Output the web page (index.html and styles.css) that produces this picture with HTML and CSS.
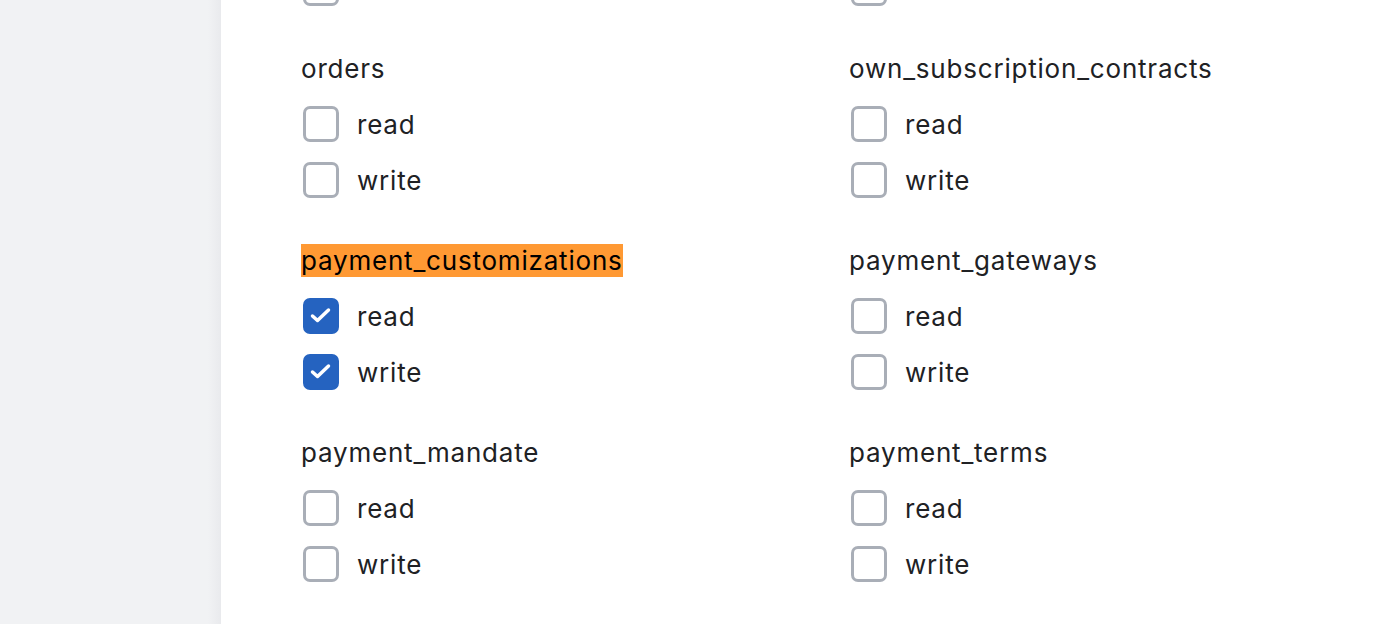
FILE: index.html
```html
<!DOCTYPE html>
<html>
<head>
<meta charset="utf-8">
<link rel="stylesheet" href="styles.css">
</head>
<body>
<div class="layout">
  <aside class="sidebar"></aside>
  <main class="panel">
    <div class="grid">
      <section class="group">
        <div class="title">&nbsp;</div>
        <label class="opt"><span class="box"></span><span>read</span></label>
        <label class="opt"><span class="box"></span><span>write</span></label>
      </section>
      <section class="group">
        <div class="title">&nbsp;</div>
        <label class="opt"><span class="box"></span><span>read</span></label>
        <label class="opt"><span class="box"></span><span>write</span></label>
      </section>

      <section class="group">
        <div class="title">orders</div>
        <label class="opt"><span class="box"></span><span>read</span></label>
        <label class="opt"><span class="box"></span><span>write</span></label>
      </section>
      <section class="group">
        <div class="title">own_subscription_contracts</div>
        <label class="opt"><span class="box"></span><span>read</span></label>
        <label class="opt"><span class="box"></span><span>write</span></label>
      </section>

      <section class="group">
        <div class="title"><mark class="hl">payment_customizations</mark></div>
        <label class="opt"><span class="box checked"><svg viewBox="0 0 36 36" width="36" height="36"><path d="M9.5 18 L14.5 22.5 L25.5 12" fill="none" stroke="#fff" stroke-width="3.5" stroke-linecap="round" stroke-linejoin="round"/></svg></span><span>read</span></label>
        <label class="opt"><span class="box checked"><svg viewBox="0 0 36 36" width="36" height="36"><path d="M9.5 18 L14.5 22.5 L25.5 12" fill="none" stroke="#fff" stroke-width="3.5" stroke-linecap="round" stroke-linejoin="round"/></svg></span><span>write</span></label>
      </section>
      <section class="group">
        <div class="title">payment_gateways</div>
        <label class="opt"><span class="box"></span><span>read</span></label>
        <label class="opt"><span class="box"></span><span>write</span></label>
      </section>

      <section class="group">
        <div class="title">payment_mandate</div>
        <label class="opt"><span class="box"></span><span>read</span></label>
        <label class="opt"><span class="box"></span><span>write</span></label>
      </section>
      <section class="group">
        <div class="title">payment_terms</div>
        <label class="opt"><span class="box"></span><span>read</span></label>
        <label class="opt"><span class="box"></span><span>write</span></label>
      </section>
    </div>
  </main>
</div>
</body>
</html>
```
FILE: styles.css
```css
html, body {
  margin: 0;
  padding: 0;
  height: 100%;
  overflow: hidden;
  background: #fff;
}
body {
  font-family: Inter, "Noto Sans", sans-serif;
  color: #202124;
  letter-spacing: 0.8px;
}
.layout {
  display: flex;
  height: 624px;
  overflow: hidden;
}
.sidebar {
  width: 221px;
  flex: none;
  background: linear-gradient(to right, #f1f2f4 0, #f1f2f4 208px, #e9eaed 221px);
}
.panel {
  flex: 1;
  background: #fff;
  padding-left: 80px;
  overflow: hidden;
}
.grid {
  display: grid;
  grid-template-columns: 548px 1fr;
  row-gap: 24px;
  margin-top: -152px;
}
.group {
  display: flex;
  flex-direction: column;
}
.title {
  height: 56px;
  font-size: 26px;
  line-height: 58px;
  white-space: nowrap;
}
.hl {
  background: #ff9933;
  color: #000;
  padding: 0;
  line-height: 33px;
  display: inline-block;
}
.opt {
  height: 56px;
  display: flex;
  align-items: center;
  gap: 18px;
  font-size: 26px;
  padding-left: 2px;
}
.box {
  width: 36px;
  height: 36px;
  box-sizing: border-box;
  border: 3px solid #a9aeb7;
  border-radius: 7px;
  flex: none;
  position: relative;
}
.box.checked {
  background: #2563c0;
  border-color: #2563c0;
}
.box svg {
  position: absolute;
  left: -3px;
  top: -3px;
}
```
